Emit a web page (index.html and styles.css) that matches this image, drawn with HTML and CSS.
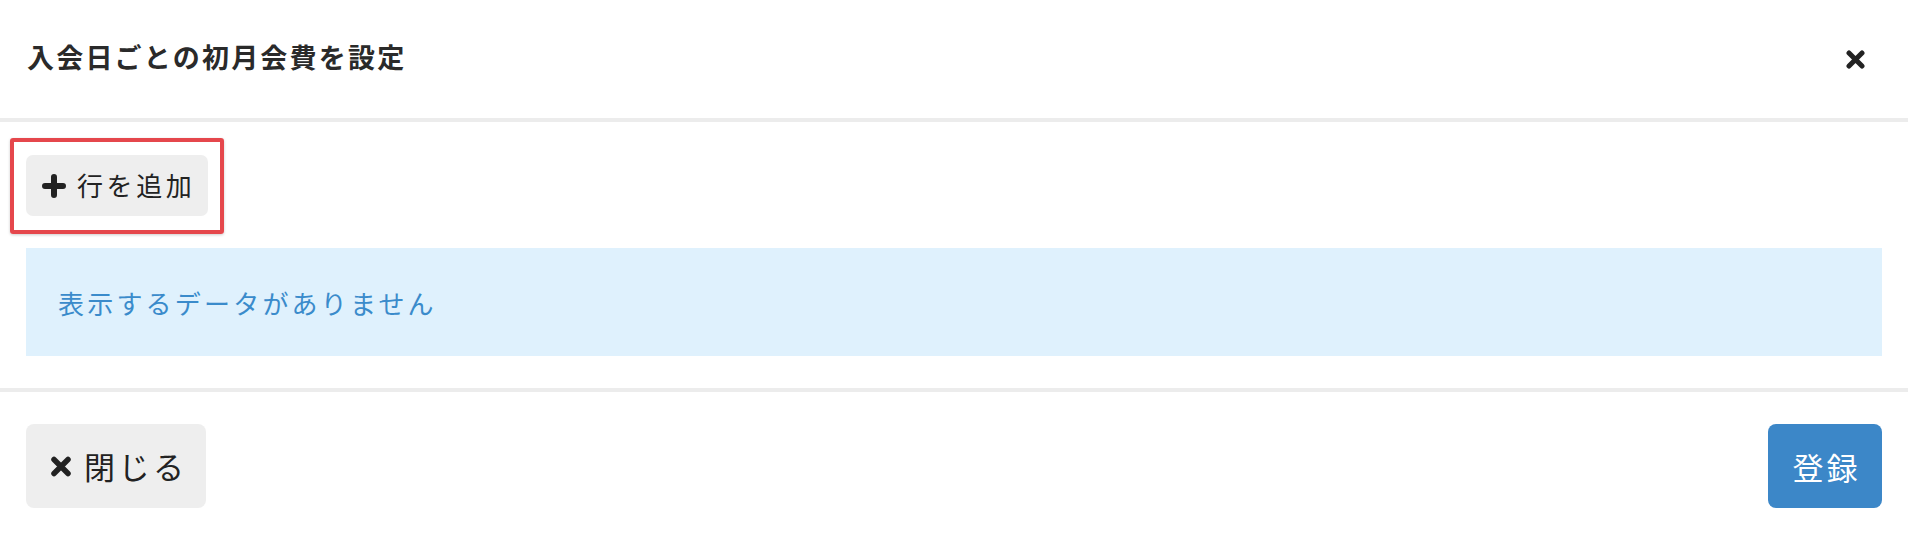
FILE: index.html
```html
<!DOCTYPE html>
<html lang="ja">
<head>
    <meta charset="UTF-8">
    <meta name="viewport" content="width=device-width, initial-scale=1.0">
    <title>入会日ごとの初月会費を設定</title>
    <link rel="stylesheet" href="styles.css">
</head>
<body>

    <div class="modal">
        <div class="modal-header">
            <h2 class="modal-title">入会日ごとの初月会費を設定</h2>
            <button class="btn-x" title="閉じる">
                <svg width="19" height="19" viewBox="0 0 19 19">
                    <path d="M3 3 L16 16 M16 3 L3 16" stroke="#222" stroke-width="5" stroke-linecap="round"/>
                </svg>
            </button>
        </div>

        <div class="modal-body">
            <div class="highlight-wrap">
                <button class="btn btn-add">
                    <svg width="24" height="24" viewBox="0 0 24 24">
                        <path d="M12 3 V21 M3 12 H21" stroke="#222" stroke-width="6" stroke-linecap="round"/>
                    </svg>
                    <span>行を追加</span>
                </button>
                <span class="highlight"></span>
            </div>

            <div class="empty-info">表示するデータがありません</div>
        </div>

        <div class="modal-footer">
            <button class="btn btn-close">
                <svg width="22" height="21" viewBox="0 0 22 21">
                    <path d="M4 3.5 L18 17.5 M18 3.5 L4 17.5" stroke="#222" stroke-width="5.5" stroke-linecap="round"/>
                </svg>
                <span>閉じる</span>
            </button>
            <button class="btn btn-primary">登録</button>
        </div>
    </div>

</body>
</html>
```

FILE: styles.css
```css
body {
    margin: 0;
    font-family: "Noto Sans CJK JP", "Noto Sans", sans-serif;
    color: #222;
    background-color: white;
}
.modal {
    width: 1908px;
    height: 536px;
    display: flex;
    flex-direction: column;
}
.modal-header {
    height: 118px;
    display: flex;
    align-items: center;
    justify-content: space-between;
    padding: 0 43px 0 27px;
    border-bottom: 4px solid #ececec;
}
.modal-title {
    margin: 0;
    font-size: 27px;
    font-weight: bold;
    letter-spacing: 2.2px;
    color: #2a2a2a;
    padding-bottom: 6px;
}
.btn-x {
    border: none;
    background: none;
    padding: 0;
    width: 19px;
    height: 19px;
    cursor: pointer;
}
.modal-body {
    padding: 33px 26px 32px;
    border-bottom: 4px solid #ececec;
}
.highlight-wrap {
    position: relative;
    display: inline-block;
    vertical-align: top;
}
.highlight {
    position: absolute;
    left: -16px;
    right: -16px;
    top: -17px;
    bottom: -18px;
    border: 4px solid #e5474c;
    border-radius: 3px;
    box-shadow: 0 1px 3px rgba(0, 0, 0, 0.2);
}
.btn {
    display: inline-flex;
    align-items: center;
    border: none;
    cursor: pointer;
    font-family: inherit;
    color: #222;
}
.btn-add {
    height: 61px;
    width: 182px;
    padding: 0 0 0 16px;
    gap: 11px;
    background-color: #eeeeee;
    border-radius: 7px;
    font-size: 26px;
    letter-spacing: 3.6px;
}
.btn-add span {
    margin-top: -2px;
}
.empty-info {
    margin-top: 32px;
    height: 108px;
    display: flex;
    align-items: center;
    padding-left: 32px;
    background-color: #dff1fd;
    color: #3a8bcb;
    font-size: 26px;
    letter-spacing: 3.2px;
}
.modal-footer {
    flex: 1;
    display: flex;
    justify-content: space-between;
    align-items: flex-start;
    padding: 32px 26px 0;
}
.btn-close {
    height: 84px;
    width: 180px;
    padding: 0 0 0 24px;
    gap: 12px;
    background-color: #eeeeee;
    border-radius: 8px;
    font-size: 31px;
    letter-spacing: 3.5px;
}
.btn-close span {
    margin-top: -2px;
}
.btn-primary {
    height: 84px;
    width: 114px;
    justify-content: center;
    background-color: #3c87c8;
    color: white;
    border-radius: 8px;
    font-size: 31px;
    letter-spacing: 3px;
    padding: 0 0 0 3px;
}
.btn-primary:hover {
    background-color: #2f75b3;
}
```
